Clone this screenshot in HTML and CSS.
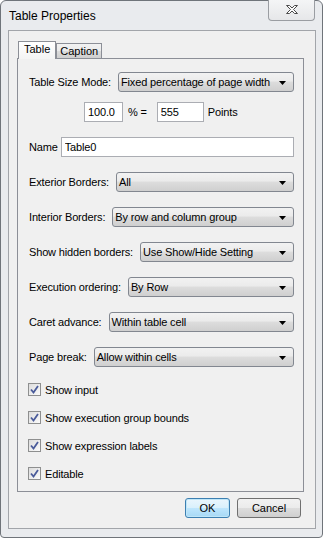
FILE: index.html
```html
<!DOCTYPE html>
<html>
<head>
<meta charset="utf-8">
<link rel="stylesheet" href="styles.css">
</head>
<body>
<div class="window">
  <div class="titlebar">
    <span class="title">Table Properties</span>
    <div class="close">
      <svg width="14" height="11" viewBox="0 0 14 11">
        <path d="M1.5 1.5h3l2.5 2.5 2.5-2.5h3l-4 4 4 4h-3l-2.5-2.5-2.5 2.5h-3l4-4z" fill="#fbfbfb" stroke="#4b4b4b" stroke-width="1" stroke-linejoin="round"/>
      </svg>
    </div>
  </div>
  <div class="client">
    <div class="tabs">
      <div class="tab active">Table</div>
      <div class="tab">Caption</div>
    </div>
    <div class="panel">
      <div class="row">
        <span class="lbl">Table Size Mode:</span>
        <div class="combo"><span>Fixed percentage of page width</span><svg class="arrow" width="7" height="4" viewBox="0 0 7 4"><path d="M0 0h7l-3.5 4z" fill="#000"/></svg></div>
      </div>
      <div class="row size-row">
        <input class="field pct" value="100.0">
        <span class="eq">% =</span>
        <input class="field pts" value="555">
        <span class="unit">Points</span>
      </div>
      <div class="row">
        <span class="lbl name-lbl">Name</span>
        <input class="field name" value="Table0">
      </div>
      <div class="row">
        <span class="lbl">Exterior Borders:</span>
        <div class="combo"><span>All</span><svg class="arrow" width="7" height="4" viewBox="0 0 7 4"><path d="M0 0h7l-3.5 4z" fill="#000"/></svg></div>
      </div>
      <div class="row">
        <span class="lbl">Interior Borders:</span>
        <div class="combo"><span>By row and column group</span><svg class="arrow" width="7" height="4" viewBox="0 0 7 4"><path d="M0 0h7l-3.5 4z" fill="#000"/></svg></div>
      </div>
      <div class="row">
        <span class="lbl">Show hidden borders:</span>
        <div class="combo"><span>Use Show/Hide Setting</span><svg class="arrow" width="7" height="4" viewBox="0 0 7 4"><path d="M0 0h7l-3.5 4z" fill="#000"/></svg></div>
      </div>
      <div class="row">
        <span class="lbl">Execution ordering:</span>
        <div class="combo"><span>By Row</span><svg class="arrow" width="7" height="4" viewBox="0 0 7 4"><path d="M0 0h7l-3.5 4z" fill="#000"/></svg></div>
      </div>
      <div class="row">
        <span class="lbl">Caret advance:</span>
        <div class="combo"><span>Within table cell</span><svg class="arrow" width="7" height="4" viewBox="0 0 7 4"><path d="M0 0h7l-3.5 4z" fill="#000"/></svg></div>
      </div>
      <div class="row">
        <span class="lbl">Page break:</span>
        <div class="combo"><span>Allow within cells</span><svg class="arrow" width="7" height="4" viewBox="0 0 7 4"><path d="M0 0h7l-3.5 4z" fill="#000"/></svg></div>
      </div>
      <div class="checks">
        <div class="check"><span class="box"><svg width="9" height="9" viewBox="0 0 9 9"><path d="M1 4.5l2.5 3L8 1" fill="none" stroke="#4a5b9a" stroke-width="1.8"/></svg></span><span>Show input</span></div>
        <div class="check"><span class="box"><svg width="9" height="9" viewBox="0 0 9 9"><path d="M1 4.5l2.5 3L8 1" fill="none" stroke="#4a5b9a" stroke-width="1.8"/></svg></span><span>Show execution group bounds</span></div>
        <div class="check"><span class="box"><svg width="9" height="9" viewBox="0 0 9 9"><path d="M1 4.5l2.5 3L8 1" fill="none" stroke="#4a5b9a" stroke-width="1.8"/></svg></span><span>Show expression labels</span></div>
        <div class="check"><span class="box"><svg width="9" height="9" viewBox="0 0 9 9"><path d="M1 4.5l2.5 3L8 1" fill="none" stroke="#4a5b9a" stroke-width="1.8"/></svg></span><span>Editable</span></div>
      </div>
    </div>
    <div class="buttons">
      <button class="btn ok">OK</button>
      <button class="btn cancel">Cancel</button>
    </div>
  </div>
</div>
</body>
</html>
```

FILE: styles.css
```css
* { box-sizing: border-box; }
html, body { margin: 0; padding: 0; background: #ffffff; }
body {
  font-family: "Liberation Sans", Arial, sans-serif;
  font-size: 11px;
  letter-spacing: -0.15px;
  color: #000;
}
.window {
  width: 323px;
  height: 538px;
  border: 1px solid #6f747a;
  border-radius: 6px 6px 4px 4px;
  background: #e9ebee;
  display: flex;
  flex-direction: column;
}
.titlebar {
  height: 29px;
  display: flex;
  justify-content: space-between;
  align-items: flex-start;
  padding-left: 8px;
  padding-right: 7px;
}
.title {
  font-size: 12px;
  line-height: 14px;
  letter-spacing: 0;
  margin-top: 8px;
  color: #000;
}
.close {
  width: 47px;
  height: 21px;
  margin-top: -1px;
  border: 1px solid #9a9da2;
  border-top: none;
  border-radius: 0 0 4px 4px;
  background: linear-gradient(#f4f5f6, #e6e7e9);
  display: flex;
  align-items: center;
  justify-content: center;
}
.close svg { margin-top: -1px; }
.client {
  flex: 1;
  margin: 0 6px 8px 7px;
  border: 1px solid #a2a5aa;
  background: #f0f0f0;
  padding: 10px 11px 10px 8px;
  display: flex;
  flex-direction: column;
}
.tabs {
  display: flex;
  align-items: flex-end;
  height: 17px;
  padding-left: 1px;
  position: relative;
  z-index: 1;
}
.tab {
  height: 15px;
  padding: 0 3px;
  border: 1px solid #8c8f97;
  border-bottom: none;
  background: linear-gradient(#f2f2f2 0%, #ebebeb 50%, #dcdcdc 51%, #cfcfcf 100%);
  line-height: 15px;
  font-size: 11px;
  letter-spacing: 0;
}
.tab.active {
  height: 18px;
  margin-bottom: -1px;
  padding: 0 5px;
  background: linear-gradient(#ffffff, #f4f4f4);
  line-height: 15px;
}
.panel {
  height: 434px;
  border: 1px solid #8c8f97;
  background: #f0f0f0;
  padding: 13px 9px 0 11px;
  display: flex;
  flex-direction: column;
  gap: 15px;
}
.row {
  display: flex;
  align-items: center;
  height: 20px;
}
.lbl {
  white-space: nowrap;
  margin-right: 7px;
}
.name-lbl { margin-right: 3px; }
.combo {
  flex: 1;
  height: 20px;
  border: 1px solid #828790;
  border-radius: 3px;
  background: linear-gradient(#f2f2f2 0%, #ebebeb 45%, #dddddd 50%, #cfcfcf 100%);
  display: flex;
  align-items: center;
  justify-content: space-between;
  padding: 0 7px 0 2px;
  white-space: nowrap;
}
.arrow { margin-top: 1px; }
.field {
  height: 20px;
  border: 1px solid #abadb3;
  background: #fff;
  font-family: "Liberation Sans", Arial, sans-serif;
  font-size: 11px;
  letter-spacing: -0.15px;
  color: #000;
  padding: 0 3px;
  margin: 0;
  outline: none;
}
.size-row { margin-top: -5px; padding-left: 55px; }
.pct { width: 39px; }
.eq { margin-left: 5px; }
.pts { width: 47px; margin-left: 10px; }
.unit { margin-left: 4px; }
.name { flex: 1; }
.checks {
  display: flex;
  flex-direction: column;
  gap: 15px;
  margin-top: 1px;
}
.check {
  display: flex;
  align-items: center;
  height: 13px;
  margin-left: -1px;
}
.box {
  width: 13px;
  height: 13px;
  border: 1px solid #8e8f8f;
  background: linear-gradient(135deg, #dcdcdc, #fbfbfb);
  display: flex;
  align-items: center;
  justify-content: center;
  margin-right: 4px;
}
.buttons {
  display: flex;
  justify-content: flex-end;
  gap: 7px;
  margin-top: 6px;
  padding-right: 3px;
}
.btn {
  height: 20px;
  font-family: "Liberation Sans", Arial, sans-serif;
  font-size: 11px;
  color: #000;
  border: 1px solid #707070;
  border-radius: 3px;
  background: linear-gradient(#f2f2f2 0%, #ebebeb 50%, #dddddd 51%, #cfcfcf 100%);
  padding: 0;
  margin: 0;
}
.ok {
  width: 45px;
  border-color: #3c7fb1;
  box-shadow: inset 0 0 0 1px #bfe6f8;
  background: linear-gradient(#eaf6fd 0%, #d9f0fc 50%, #bee6fd 51%, #a7d9f5 100%);
}
.cancel { width: 64px; }
```
